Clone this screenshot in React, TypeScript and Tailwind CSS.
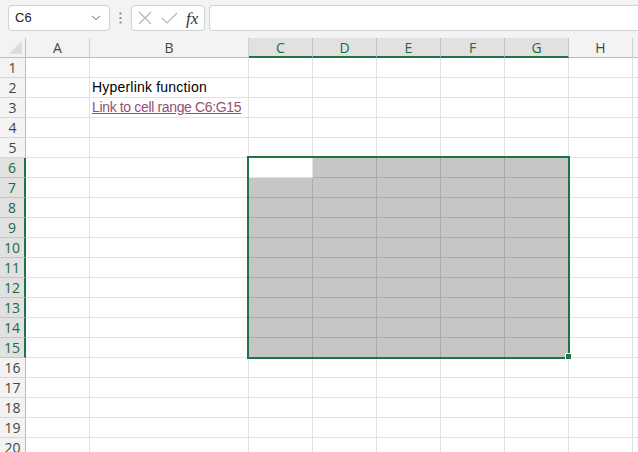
import { ChevronDown } from 'lucide-react';

const cols = [
  { name: 'A', w: 64 },
  { name: 'B', w: 159 },
  { name: 'C', w: 64 },
  { name: 'D', w: 64 },
  { name: 'E', w: 64 },
  { name: 'F', w: 64 },
  { name: 'G', w: 64 },
  { name: 'H', w: 64 },
  { name: 'I', w: 64 },
];

const selCols = ['C', 'D', 'E', 'F', 'G'];
const rows = Array.from({ length: 20 }, (_, i) => i + 1);

function isShaded(col: string, row: number): boolean {
  if (!selCols.includes(col)) return false;
  if (row < 6 || row > 15) return false;
  return !(col === 'C' && row === 6);
}

function FormulaBar(): JSX.Element {
  return (
    <div className="flex h-[38px] items-start gap-0 bg-[#f3f3f3] pt-[5px] pl-2">
      <div className="flex h-[26px] w-[102px] items-center justify-between rounded-[4px] border border-[#d1d1d1] bg-white pl-[6px] pr-[6px] text-[13px] text-[#222]">
        <span>C6</span>
        <ChevronDown size={14} strokeWidth={1.6} className="text-[#555]" />
      </div>
      <div className="flex h-[26px] w-[21px] items-center justify-center text-[#888]">
        <svg width="3" height="12" viewBox="0 0 3 12">
          <rect x="0.5" y="0.5" width="2" height="2" fill="#8a8a8a" />
          <rect x="0.5" y="5" width="2" height="2" fill="#8a8a8a" />
          <rect x="0.5" y="9.5" width="2" height="2" fill="#8a8a8a" />
        </svg>
      </div>
      <div className="flex h-[26px] w-[74px] items-center rounded-[4px] border border-[#d1d1d1] bg-white">
        <svg width="14" height="14" viewBox="0 0 14 14" className="ml-[6px]">
          <path d="M1 1 L13 13 M13 1 L1 13" stroke="#b5b5b5" strokeWidth="1.2" fill="none" />
        </svg>
        <svg width="17" height="12" viewBox="0 0 17 12" className="ml-[9px]">
          <path d="M1 6 L6 11 L16 1" stroke="#b5b5b5" strokeWidth="1.2" fill="none" />
        </svg>
        <span className="ml-[8px] font-['Liberation_Serif',serif] text-[17px] italic leading-none text-[#333]">
          fx
        </span>
      </div>
      <div className="ml-[4px] h-[26px] flex-1 rounded-l-[4px] border border-r-0 border-[#d1d1d1] bg-white" />
    </div>
  );
}

export default function App(): JSX.Element {
  return (
    <div className="h-[452px] w-[638px] overflow-hidden bg-white font-['Liberation_Sans',sans-serif]">
      <FormulaBar />
      <div className="relative">
        {/* column headers */}
        <div className="flex h-[20px]">
          <div className="relative h-[20px] w-[26px] shrink-0 border-r border-b border-[#bdbdbd] bg-[#f3f3f3]">
            <svg width="13" height="13" viewBox="0 0 13 13" className="absolute right-[3px] bottom-[3px]">
              <path d="M13 0 L13 13 L0 13 Z" fill="#dcdcdc" />
            </svg>
          </div>
          {cols.map((c) => {
            const sel = selCols.includes(c.name);
            return (
              <div
                key={c.name}
                style={{ width: c.w }}
                className={`flex h-[20px] shrink-0 items-center justify-center border-r text-[14px] font-['Open_Sans',sans-serif] ${
                  sel
                    ? 'border-b-2 border-r-[#c4c4c4] border-b-[#217346] bg-[#e1e1e1] text-[#1d6a43]'
                    : 'border-b border-r-[#d0d0d0] border-b-[#bdbdbd] bg-[#f3f3f3] text-[#444]'
                }`}
              >
                {c.name === 'I' ? '' : c.name}
              </div>
            );
          })}
        </div>
        {rows.map((r) => {
          const selRow = r >= 6 && r <= 15;
          return (
            <div key={r} className="flex h-[20px]">
              <div
                className={`flex h-[20px] w-[26px] shrink-0 items-center justify-center border-b text-[14px] font-['Open_Sans',sans-serif] ${
                  selRow
                    ? 'border-r-2 border-r-[#217346] border-b-[#c4c4c4] bg-[#e1e1e1] text-[#1d6a43]'
                    : 'border-r border-r-[#bdbdbd] border-b-[#d8d8d8] bg-[#f3f3f3] text-[#444]'
                }`}
              >
                {r}
              </div>
              {cols.map((c) => {
                const shaded = isShaded(c.name, r);
                return (
                  <div
                    key={c.name}
                    style={{ width: c.w }}
                    className={`flex h-[20px] shrink-0 items-end border-r border-b pl-[2px] text-[14px] whitespace-nowrap ${
                      shaded ? 'border-[#ababab] bg-[#c6c6c6]' : 'border-[#e1e1e1] bg-white'
                    }`}
                  >
                    {c.name === 'B' && r === 2 && (
                      <span className="pb-[1px] leading-[17px] tracking-[0.2px] text-black">Hyperlink function</span>
                    )}
                    {c.name === 'B' && r === 3 && (
                      <span className="pb-[1px] leading-[17px] tracking-[-0.35px] text-[#954f72] underline decoration-[#954f72]">
                        Link to cell range C6:G15
                      </span>
                    )}
                  </div>
                );
              })}
            </div>
          );
        })}
        {/* selection outline */}
        <div className="pointer-events-none absolute top-[118px] left-[247px] h-[203px] w-[323px] border-2 border-[#217346]" />
        <div className="pointer-events-none absolute top-[315px] left-[565px] h-[7px] w-[7px] border border-white bg-[#217346]" />
      </div>
    </div>
  );
}
